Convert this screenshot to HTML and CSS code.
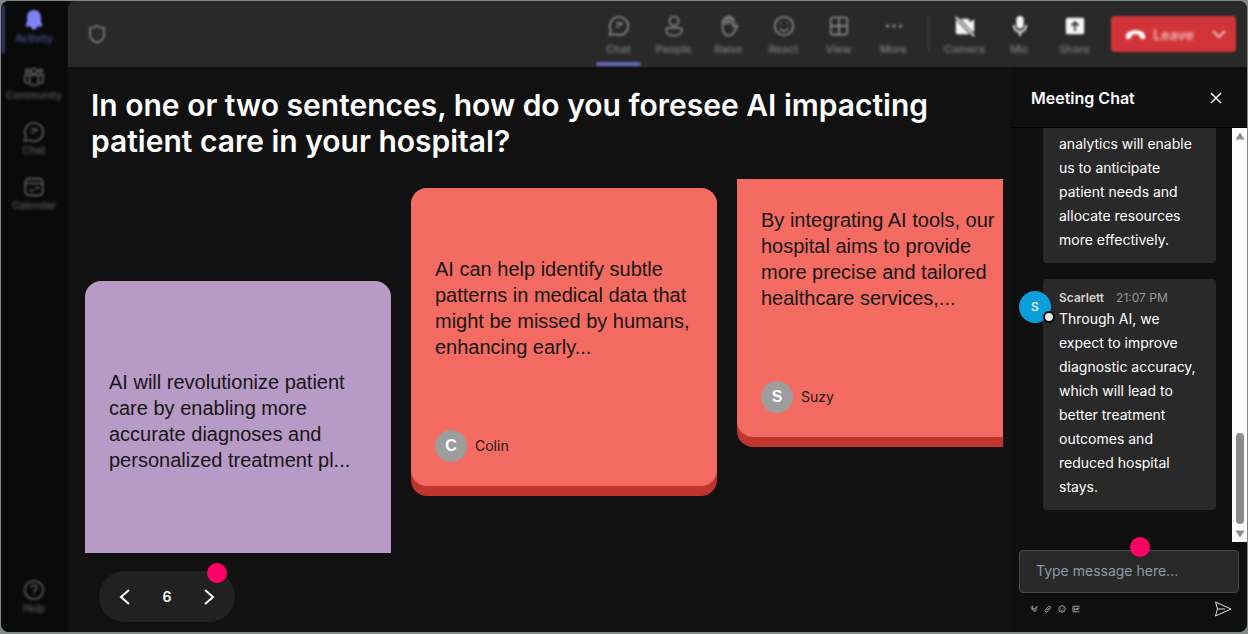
FILE: index.html
```html
<!DOCTYPE html>
<html lang="en">
<head>
<meta charset="utf-8">
<title>Meeting</title>
<link rel="stylesheet" href="styles.css">
</head>
<body>
<div class="app">
  <nav class="rail">
    <button class="rail-item active"><svg class="icon" viewBox="0 0 24 24"><path class="solid" d="M12 1c-4.600 0-7.500 3.400-7.500 7.600v4.600L3 17.500c-.3.8.2 1.500 1 1.500h4.500c.4 2 1.800 3.400 3.500 3.400s3.100-1.400 3.500-3.400H20c.8 0 1.300-.7 1-1.500l-1.500-4.300V8.600C19.500 4.400 16.600 1 12 1z"/></svg><span>Activity</span></button>
    <button class="rail-item"><svg class="icon" viewBox="0 0 24 24"><circle cx="12" cy="5.500" r="3"/><circle cx="5" cy="5.500" r="2"/><circle cx="19" cy="5.500" r="2"/><path d="M7 10h10v6a5 5 0 0 1-10 0zM7 10H2v5a4 4 0 0 0 5 4M17 10h5v5a4 4 0 0 1-5 4"/></svg><span>Community</span></button>
    <button class="rail-item"><svg class="icon" viewBox="0 0 24 24"><path d="M12 2a10 10 0 1 1-4.600 18.900L2 22l1.100-5.400A10 10 0 0 1 12 2zM9 9h6l-2 3M9 13h3"/></svg><span>Chat</span></button>
    <button class="rail-item"><svg class="icon" viewBox="0 0 24 24"><rect x="2.500" y="3" width="19" height="18" rx="4"/><path d="M3 8h18M13 13h5M7 16h5"/></svg><span>Calendar</span></button>
    <button class="rail-item help"><svg class="icon" viewBox="0 0 24 24"><circle cx="12" cy="12" r="10"/><path d="M9 9.500a3 3 0 1 1 4.500 2.600c-1 .6-1.500 1.100-1.500 2.400M12 17v1"/></svg><span>Help</span></button>
  </nav>
  <div class="workspace">
    <header class="topbar">
      <svg class="icon shield" viewBox="0 0 24 24"><path d="M12 2c2.500 2 5.500 3 8.500 3v7c0 5-3.500 8.500-8.500 10.500C7 20.500 3.500 17 3.500 12V5C6.500 5 9.500 4 12 2z"/></svg>
      <div class="tools">
        <button class="tool current"><svg class="icon" viewBox="0 0 24 24"><path d="M12 2a10 10 0 1 1-4.600 18.900L2 22l1.100-5.400A10 10 0 0 1 12 2zM9 9h6l-2 3M9 13h3"/></svg><span>Chat</span></button>
        <button class="tool"><svg class="icon" viewBox="0 0 24 24"><circle cx="12" cy="6.500" r="5"/><path d="M5.500 14h13c1.400 0 2 1 2 2 0 4-3.500 6.500-8.500 6.500S3.500 20 3.500 16c0-1 .6-2 2-2z"/></svg><span>People</span></button>
        <button class="tool"><svg class="icon" viewBox="0 0 24 24"><path d="M5 13V6.500a1.500 1.500 0 0 1 3 0V11M8 10V3.500a1.500 1.500 0 0 1 3 0V10M11 10V2.500a1.500 1.500 0 0 1 3 0V10M14 10V5a1.500 1.500 0 0 1 3 0v8l2-1.500c1.500-.8 3 .3 2 1.700-2.500 3-4 9.300-9 9.300-5 0-7-4-7-9.500"/></svg><span>Raise</span></button>
        <button class="tool"><svg class="icon" viewBox="0 0 24 24"><circle cx="12" cy="12" r="10"/><path d="M7.500 15c2.500 3 6.500 3 9 0M8.500 8.500v1.500M15.500 8.500v1.500"/></svg><span>React</span></button>
        <button class="tool"><svg class="icon" viewBox="0 0 24 24"><rect x="3" y="2.500" width="18" height="19" rx="3"/><path d="M12 3v18M3 12h18"/></svg><span>View</span></button>
        <button class="tool"><svg class="icon" viewBox="0 0 24 24"><g class="solid"><circle cx="5" cy="12" r="2"/><circle cx="12" cy="12" r="2"/><circle cx="19" cy="12" r="2"/></g></svg><span>More</span></button>
        <i class="divider"></i>
        <button class="tool bright"><svg class="icon" viewBox="0 0 24 24"><path class="solid" d="M2 5l15 16H4a2 2 0 0 1-2-2zM7 4h8a2 2 0 0 1 2 2v2l5-3v14l-4-3z"/><path d="M2 2l20 21"/></svg><span>Camera</span></button>
        <button class="tool bright"><svg class="icon" viewBox="0 0 24 24"><rect class="solid" x="8" y="1" width="8" height="14" rx="4"/><path d="M5.500 11v1a6.500 6.500 0 0 0 13 0v-1M12 18.500V23"/></svg><span>Mic</span></button>
        <button class="tool bright"><svg class="icon" viewBox="0 0 24 24"><path class="solid" fill-rule="evenodd" d="M4 3h16a2 2 0 0 1 2 2v14a2 2 0 0 1-2 2H4a2 2 0 0 1-2-2V5a2 2 0 0 1 2-2zm8 3.500L7.500 11l1.300 1.300 2.300-2.300v7.500h1.800V10l2.300 2.300 1.300-1.300z"/></svg><span>Share</span></button>
        <button class="leave"><svg class="phone" viewBox="0 0 24 12"><path class="solid" d="M12 1C6 1 1 3.500 1 8v1.500C1 11 2 11.600 3 11.300l3.500-1c.7-.2 1-.8 1-1.600V6.500c3-1 6-1 9 0v2.200c0 .8.3 1.400 1 1.600l3.500 1c1 .3 2-.3 2-1.800V8c0-4.500-5-7-11-7z"/></svg><span>Leave</span><svg class="caret" viewBox="0 0 16 16"><path d="M2 5l6 6 6-6"/></svg></button>
      </div>
    </header>
    <div class="content">
      <main class="stage">
        <h1 class="question">In one or two sentences, how do you foresee AI impacting patient care in your hospital?</h1>
        <div class="board">
          <article class="card violet"><p>AI will revolutionize patient care by enabling more accurate diagnoses and personalized treatment pl...</p></article>
          <article class="card coral middle"><p>AI can help identify subtle patterns in medical data that might be missed by humans, enhancing early...</p><footer class="author"><b class="initial">C</b><span>Colin</span></footer></article>
          <article class="card coral raised"><p>By integrating AI tools, our hospital aims to provide more precise and tailored healthcare services,...</p><footer class="author"><b class="initial">S</b><span>Suzy</span></footer></article>
        </div>
        <div class="pager">
          <button aria-label="Previous"><svg class="chevron" viewBox="0 0 16 20"><path d="M12 3L4 10l8 7"/></svg></button>
          <span>6</span>
          <button aria-label="Next"><svg class="chevron" viewBox="0 0 16 20"><path d="M4 3l8 7-8 7"/></svg></button>
          <i class="dot pager-dot"></i>
        </div>
      </main>
      <aside class="chat">
        <header class="chat-head"><h2>Meeting Chat</h2><button aria-label="Close"><svg class="close" viewBox="0 0 12 12"><path d="M1 1l10 10M11 1L1 11"/></svg></button></header>
        <div class="chat-body">
          <div class="messages">
            <article class="bubble"><p>analytics will enable us to anticipate patient needs and allocate resources more effectively.</p></article>
            <article class="bubble">
              <span class="avatar">S<i class="status"></i></span>
              <header class="meta"><b>Scarlett</b><time>21:07 PM</time></header>
              <p>Through AI, we expect to improve diagnostic accuracy, which will lead to better treatment outcomes and reduced hospital stays.</p>
            </article>
          </div>
          <div class="scrollbar">
            <svg class="arrow" viewBox="0 0 10 8"><path d="M5 0.500L9.500 7.500h-9z"/></svg>
            <i class="thumb"></i>
            <svg class="arrow" viewBox="0 0 10 8"><path d="M5 7.500L9.500 0.500h-9z"/></svg>
          </div>
        </div>
        <form class="composer">
          <div class="field"><input type="text" aria-label="Message" placeholder="Type message here..."><i class="dot field-dot"></i></div>
          <div class="actions">
            <button type="button" aria-label="Format"><svg class="mini" viewBox="0 0 16 16"><path d="M1 5l4-3 1 9M2 8h6l7-5-8 10M9 14l5-5"/></svg></button>
            <button type="button" aria-label="Attach"><svg class="mini" viewBox="0 0 16 16"><path d="M13 6l-6 7c-3 2-6-1-4-4l6-6c3-2 6 1 4 3M5 11l6-6"/></svg></button>
            <button type="button" aria-label="Emoji"><svg class="mini" viewBox="0 0 16 16"><circle cx="8" cy="8" r="6.500"/><path d="M5 10c2 2 4 2 6 0M5.500 5.500v1.500M10.500 5.500v1.500"/></svg></button>
            <button type="button" aria-label="GIF"><svg class="mini" viewBox="0 0 16 16"><path d="M15 2.500H2v11h13M6 6H4.500v4H6V8M8.500 6v4M11 10V6h4M11 8h3"/></svg></button>
            <button class="send" type="submit" aria-label="Send"><svg class="plane" viewBox="0 0 18 16"><path d="M1.500 1l15.500 7-15.500 7L3.500 8zM3.500 8H11"/></svg></button>
          </div>
        </form>
      </aside>
    </div>
  </div>
</div>
</body>
</html>
```
FILE: styles.css
```css
* { box-sizing: border-box; }
body { margin: 0; padding: 1px 1px 2px; height: 100vh; background: #858985; font-family: Inter, "Liberation Sans", sans-serif; color: #fff; }
h1, h2, p { margin: 0; }
button { border: 0; padding: 0; background: none; color: inherit; font: inherit; display: flex; align-items: center; justify-content: center; }
svg { display: block; flex: none; fill: none; stroke: currentColor; stroke-width: 2; }
.solid { fill: currentColor; stroke: none; }

.app { display: flex; height: 100%; border-radius: 8px; overflow: hidden; background: #111; }
.rail { flex: none; width: 66px; padding: 4px 0 5px; display: flex; flex-direction: column; background: #0a0a0a; color: #545454; }
.rail-item { height: 55px; padding-bottom: 6px; flex-direction: column; gap: 0; font-size: 10px; line-height: 14px; filter: blur(1px); }
.rail-item span { font-weight: 600; filter: blur(1px); }
.rail-item.active { height: 54px; padding: 0 5px 10px 0; border-bottom: 0; color: #4c4c96; position: relative; padding-right: 0; }
.rail-item.active::before { content: ""; position: absolute; left: 0; top: 0; width: 4px; height: 48px; background: #33335f; }
.rail-item.active .icon { color: #7f83f5; }
.help { margin-top: auto; }
.icon { width: 22px; height: 22px; }

.workspace { flex: 1; min-width: 0; display: flex; flex-direction: column; }
.topbar { flex: none; height: 66px; margin-left: 1px; padding: 0 11px 0 19px; display: flex; align-items: center; justify-content: space-between; background: #292929; color: #808080; border-top-left-radius: 8px; }
.shield { width: 20px; height: 20px; filter: blur(1px); }
.tools { display: flex; align-items: center; height: 100%; filter: blur(1px); }
.tool { position: relative; width: 55px; height: 66px; padding-top: 13px; flex-direction: column; justify-content: flex-start; gap: 3px; font-size: 11px; line-height: 16px; }
.tool span { font-weight: 500; filter: blur(1px); }
.tool .icon { width: 24px; height: 24px; padding: 1px; }
.tool.current::after { content: ""; position: absolute; left: 5px; right: 5px; bottom: 1px; height: 4px; border-radius: 2px; background: #6365bd; }
.bright .icon { color: #f4f4f4; }
.divider { width: 2px; height: 36px; margin: 0 7px; background: #3b3b3b; }
.leave { width: 125px; height: 36px; margin-left: 9px; padding: 0 9px 0 14px; justify-content: space-between; border-radius: 4px; background: #d13438; color: #f0bcbd; font-size: 14px; font-weight: 600; }
.leave span { filter: blur(1px); }
.leave .phone { width: 21px; height: 11px; color: #fff; }
.caret { width: 16px; height: 16px; margin-left: 10px; }

.content { flex: 1; min-height: 0; display: flex; }
.stage { flex: 1; min-width: 0; padding: 20px 8px 10px 18px; display: flex; flex-direction: column; align-items: flex-start; background: #111; }
.question { max-width: 880px; padding-left: 6px; font-size: 30px; line-height: 36px; font-weight: 600; }
.board { flex: 1; min-height: 0; width: 100%; margin: 20px 0 18px; display: flex; align-items: flex-start; gap: 20px; overflow: hidden; }
.card { flex: none; width: 306px; height: 308px; margin-top: 102px; padding: 24px; border-radius: 16px; display: flex; flex-direction: column; color: #161616; font-family: "Liberation Sans", Arial, sans-serif; font-size: 20px; line-height: 26px; }
.card p { margin: auto 0; }
.violet { background: #b89ac6; padding-bottom: 52px; }
.coral { position: relative; z-index: 0; padding-bottom: 34px; background: #c0362c; }
.coral::before { content: ""; position: absolute; inset: 0 0 10px; z-index: -1; border-radius: 16px; background: #f46b61; }
.middle { margin-top: 9px; }
.raised { margin-top: -40px; }
.author { display: flex; align-items: center; gap: 8px; margin-top: 26px; font-family: Inter, sans-serif; font-size: 14px; line-height: 20px; }
.initial { width: 32px; height: 32px; border-radius: 50%; background: #9d9d9d; color: #fff; font: bold 16px/32px "Liberation Sans", Arial, sans-serif; text-align: center; }

.pager { position: relative; width: 136px; height: 51px; margin-left: 14px; padding: 0 18px; display: flex; align-items: center; justify-content: space-between; border-radius: 26px; background: #212121; font-size: 14px; font-weight: 600; }
.chevron { width: 16px; height: 20px; }
.dot { position: absolute; width: 20px; height: 20px; border-radius: 50%; background: #ff0066; }
.pager-dot { top: -8px; right: 8px; }

.chat { flex: none; width: 236px; display: flex; flex-direction: column; background: #0f0f0f; }
.chat-head { flex: none; height: 61px; padding: 2px 25px 0 20px; display: flex; align-items: center; justify-content: space-between; border-bottom: 1px solid #000; }
.chat-head h2 { font-size: 16px; line-height: 24px; font-weight: 600; }
.close { width: 12px; height: 12px; stroke-width: 1.500; }
.chat-body { flex: 1; min-height: 0; display: flex; overflow: hidden; }
.messages { flex: 1; min-width: 0; padding: 0 16px 32px 32px; display: flex; flex-direction: column; justify-content: flex-end; gap: 16px; }
.bubble { position: relative; flex: none; padding: 10px 16px 11px; border-radius: 4px; background: #292929; font-size: 14px; line-height: 24px; }
.meta { display: flex; gap: 12px; font-size: 12px; line-height: 18px; color: #d4d4d4; }
.meta b { font-weight: 600; }
.meta time { color: #999; }
.avatar { position: absolute; left: -24px; top: 12px; width: 32px; height: 32px; border-radius: 50%; background: #089fdb; font-size: 12px; font-weight: 500; line-height: 32px; text-align: center; }
.status { position: absolute; right: -4px; bottom: 0; width: 12px; height: 12px; border: 2px solid #000; border-radius: 50%; background: #e8e8e8; }
.scrollbar { flex: none; width: 15px; padding: 4px 0; display: flex; flex-direction: column; align-items: center; justify-content: space-between; background: #fcfcfc; }
.arrow { width: 10px; height: 8px; fill: #8b8b8b; stroke: none; }
.thumb { width: 8px; height: 91px; margin: auto 0 6px; border-radius: 4px; background: #8b8b8b; }
.composer { flex: none; padding: 8px 8px 15px; }
.field { position: relative; }
.field input { display: block; width: 100%; height: 43px; padding: 0 16px 2px; border: 1px solid #484848; border-radius: 4px; background: #292929; color: #fff; font: 14px Inter, sans-serif; }
.field input::placeholder { color: #8e9aa8; opacity: 1; }
.field-dot { top: -13px; right: 89px; }
.actions { display: flex; align-items: center; gap: 6px; padding: 8px 7px 0 11px; color: #9a9a9a; }
.mini { width: 8px; height: 8px; }
.send { margin-left: auto; color: #ddd; }
.plane { width: 18px; height: 16px; stroke-width: 1; }
```
